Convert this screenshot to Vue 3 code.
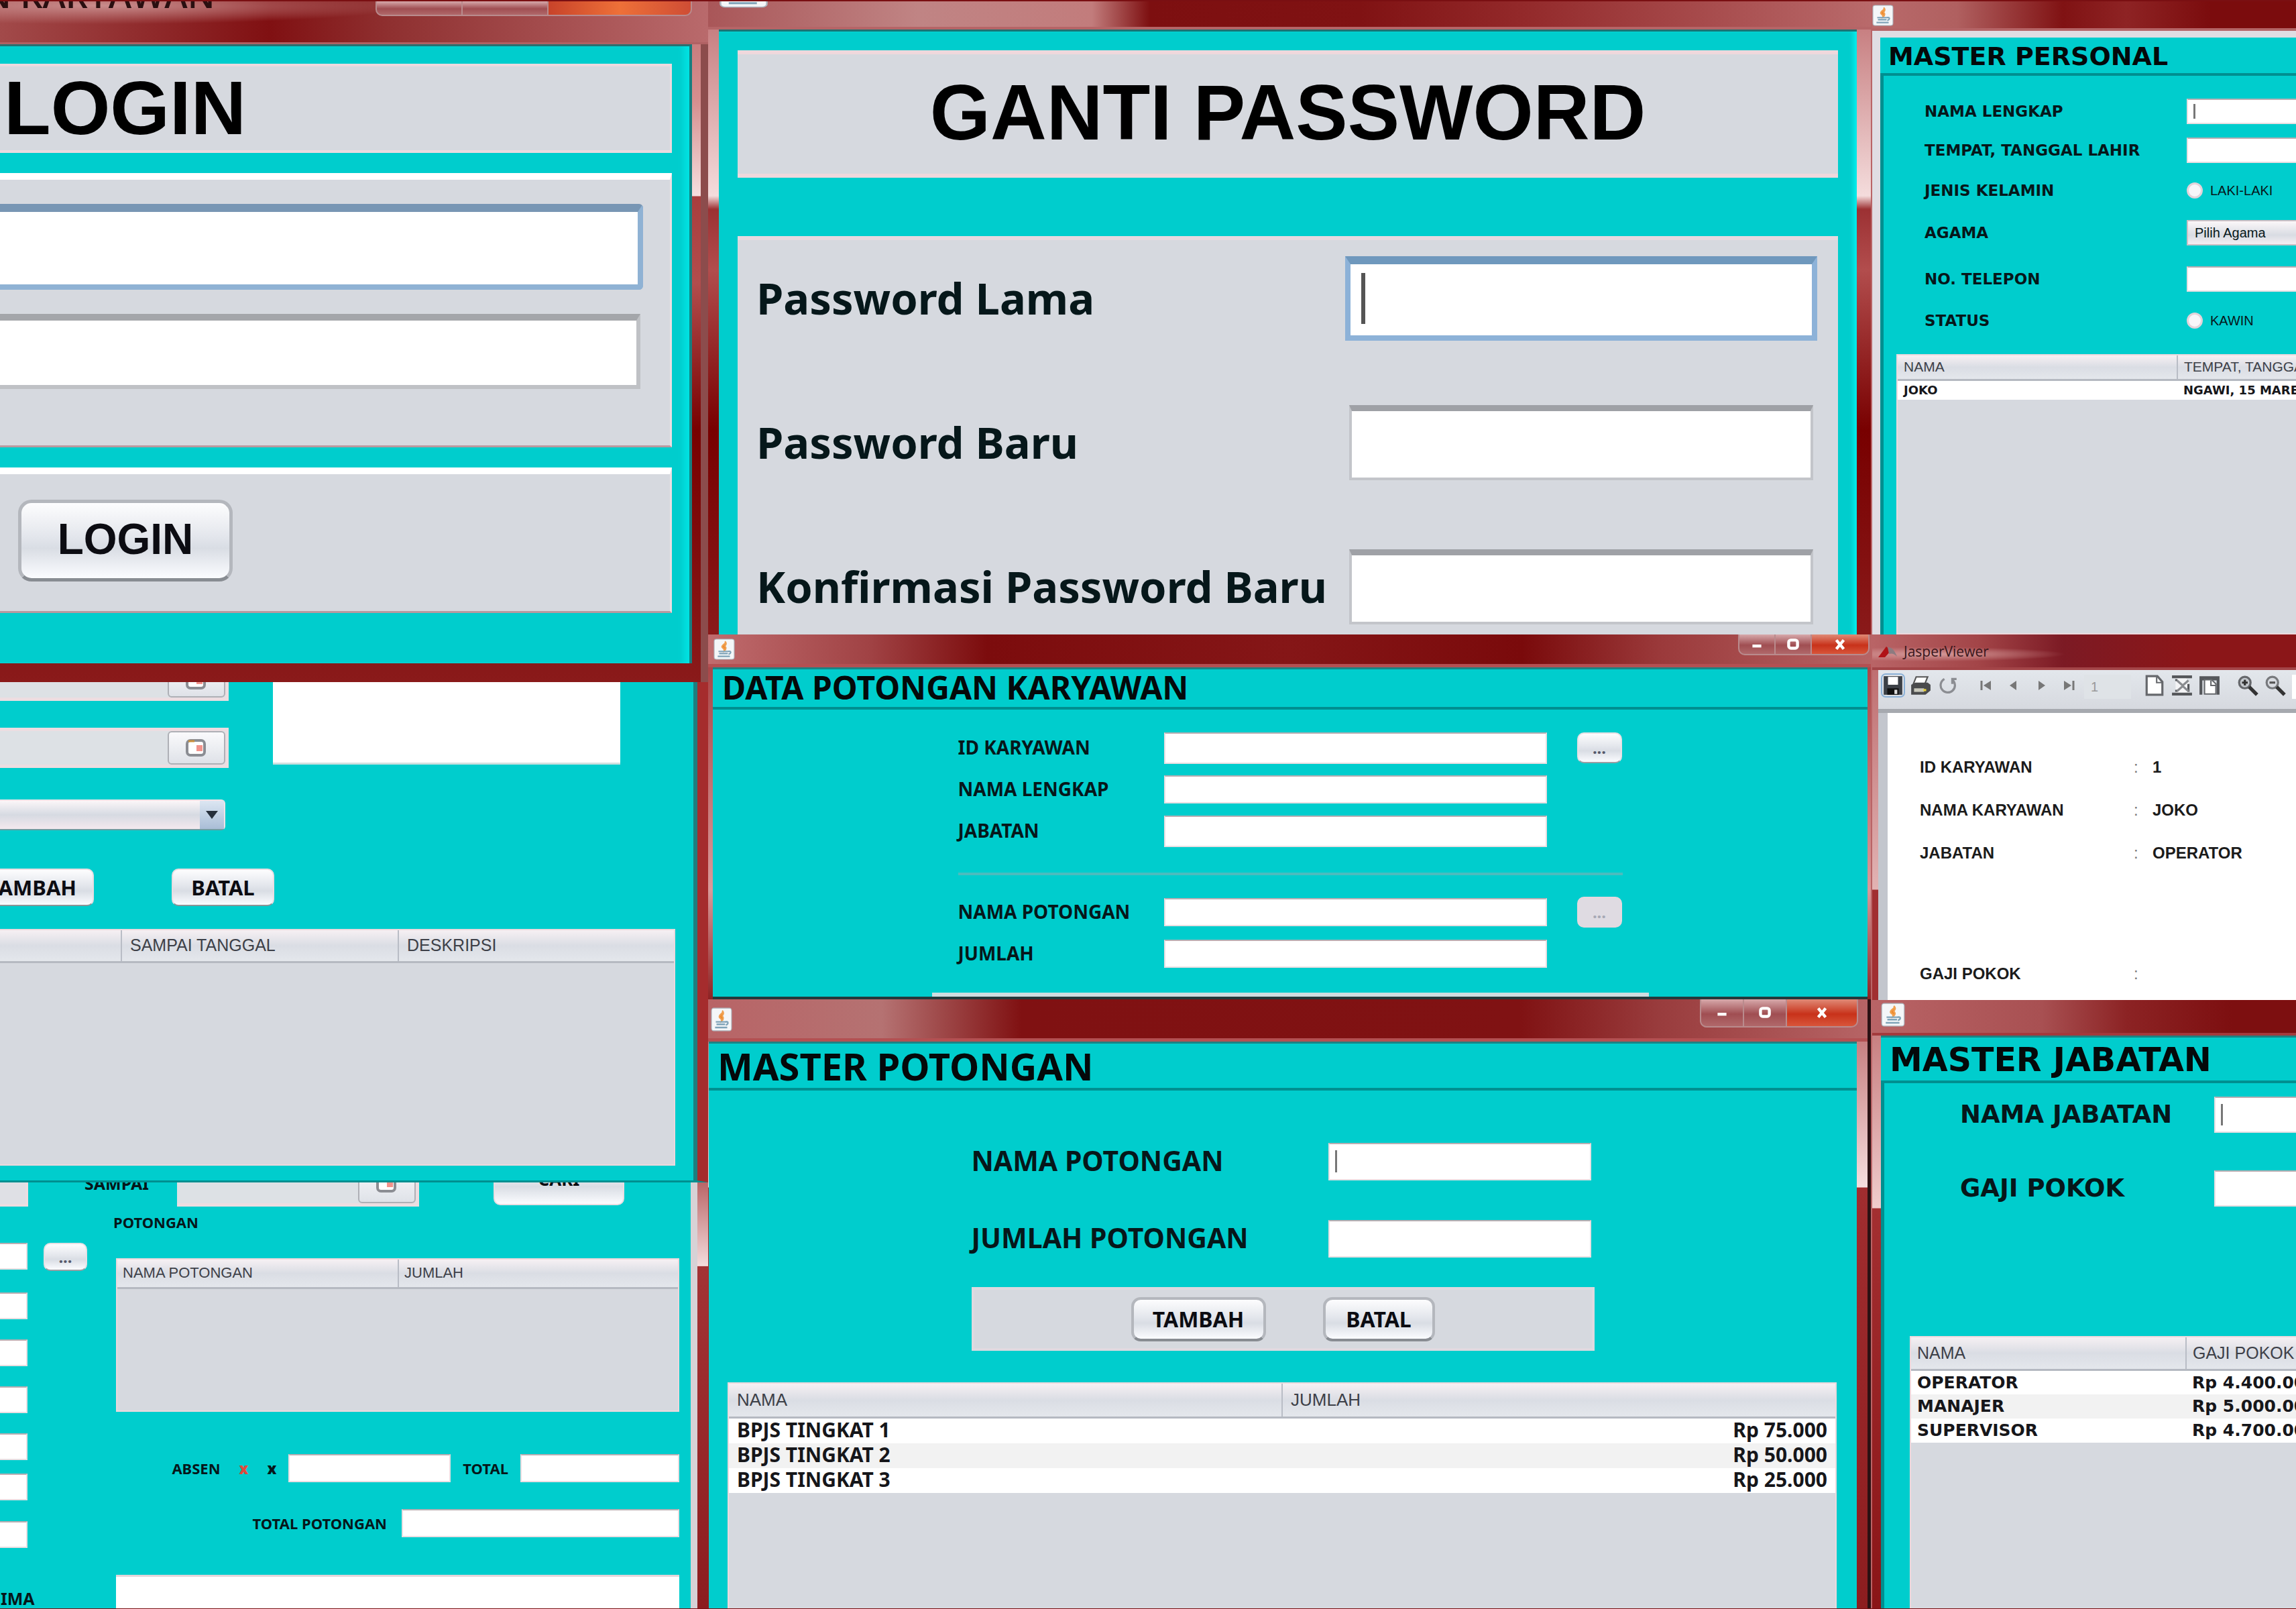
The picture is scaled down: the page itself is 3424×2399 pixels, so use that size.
<script setup>
const passwordFields = [
  { id: 'pw-lama', label: 'Password Lama', focus: true },
  { id: 'pw-baru', label: 'Password Baru' },
  { id: 'pw-konfirmasi', label: 'Konfirmasi Password Baru' }
]
const employeeFields = [
  { id: 'dp-id', label: 'ID KARYAWAN', pick: 'on', tall: true },
  { id: 'dp-nama', label: 'NAMA LENGKAP' },
  { id: 'dp-jabatan', label: 'JABATAN', tall: true }
]
const deductionFields = [
  { id: 'dp-potongan', label: 'NAMA POTONGAN', pick: 'off' },
  { id: 'dp-jumlah', label: 'JUMLAH' }
]
const deductions = [
  ['BPJS TINGKAT 1', 'Rp 75.000'],
  ['BPJS TINGKAT 2', 'Rp 50.000'],
  ['BPJS TINGKAT 3', 'Rp 25.000']
]
const positions = [
  ['OPERATOR', 'Rp 4.400.000'],
  ['MANAJER', 'Rp 5.000.000'],
  ['SUPERVISOR', 'Rp 4.700.000']
]
const slip = [
  ['ID KARYAWAN', '1'],
  ['NAMA KARYAWAN', 'JOKO'],
  ['JABATAN', 'OPERATOR'],
  ['GAJI POKOK', '']
]
</script>

<template>
  <svg class="defs" aria-hidden="true">
    <symbol id="java" viewBox="0 0 30 30" preserveAspectRatio="none">
      <rect x="1" y="1" width="28" height="28" rx="3" fill="#f4f6f8" stroke="#aeb9c2" />
      <path d="M16 4c3 3-5 5-4 8 1 2 4 2 3 5 4-3 2-5 1-6 0-2 4-3 0-7z" fill="#ee8a2c" stroke="#f0a050" stroke-width="2" />
      <path d="M7 18h15M8 21h12M6 25h17" stroke="#7fa3b8" stroke-width="2" fill="none" />
      <path d="M21 18c4-1 4 3 0 4" stroke="#7fa3b8" stroke-width="2" fill="none" />
    </symbol>
    <symbol id="calendar" viewBox="0 0 36 28">
      <rect x="4" y="3" width="26" height="22" rx="5" fill="#fff" stroke="#8b8d93" stroke-width="4" />
      <path d="M6 4h9" stroke="#c9903c" stroke-width="3" />
      <rect x="18" y="10" width="9" height="9" fill="#f2938c" />
    </symbol>
  </svg>

  <main class="board">
    <div class="column">
      <section class="win login">
        <header class="bar bar-login">
          <span class="bar-name">N KARYAWAN</span>
          <div class="controls controls-cut">
            <button aria-label="Minimize"></button><button aria-label="Maximize"></button><button class="close" aria-label="Close"></button>
          </div>
        </header>
        <form class="login-body" @submit.prevent>
          <h1 class="login-title">LOGIN</h1>
          <div class="raised login-fields">
            <input class="tf focus" aria-label="Username" />
            <input class="tf" type="password" aria-label="Password" />
          </div>
          <div class="raised login-actions"><button class="btn btn-login">LOGIN</button></div>
        </form>
      </section>

      <section class="win absence">
        <div class="absence-top">
          <div class="absence-left">
            <div class="date date-cut"><input aria-label="Dari tanggal" /><button aria-label="Pilih tanggal"><svg><use href="#calendar" /></svg></button></div>
            <div class="date"><input aria-label="Sampai tanggal" /><button aria-label="Pilih tanggal"><svg><use href="#calendar" /></svg></button></div>
            <div class="combo"><select aria-label="Keterangan"><option></option></select><span class="combo-arrow"></span></div>
          </div>
          <textarea class="note" aria-label="Deskripsi"></textarea>
        </div>
        <div class="absence-actions">
          <button class="btn btn-small btn-tambah">TAMBAH</button>
          <button class="btn btn-small">BATAL</button>
        </div>
        <div class="sheet absence-sheet">
          <table>
            <colgroup><col class="w181" /><col class="w413" /><col /></colgroup>
            <thead><tr><th></th><th>SAMPAI TANGGAL</th><th>DESKRIPSI</th></tr></thead>
          </table>
        </div>
      </section>

      <section class="win payroll">
        <div class="payroll-top">
          <div class="stub"></div>
          <label for="pr-sampai" class="lbl-s cut">SAMPAI</label>
          <div class="date date-cut"><input id="pr-sampai" /><button aria-label="Pilih tanggal"><svg><use href="#calendar" /></svg></button></div>
          <button class="btn btn-cari">CARI</button>
        </div>
        <div class="payroll-body">
          <div class="payroll-left">
            <div class="left-row"><input class="tf" aria-label="ID" /><button class="btn dots" aria-label="Pilih karyawan">...</button></div>
            <div v-for="n in 6" :key="n" class="left-row"><input class="tf" :aria-label="'Data ' + n" /></div>
            <span class="lbl-s ima">IMA</span>
          </div>
          <div class="payroll-right">
            <div class="lbl-s potongan">POTONGAN</div>
            <div class="sheet payroll-sheet">
              <table>
                <colgroup><col class="w419" /><col /></colgroup>
                <thead><tr><th>NAMA POTONGAN</th><th>JUMLAH</th></tr></thead>
              </table>
            </div>
            <div class="sum-row">
              <label class="lbl-s" for="pr-absen">ABSEN</label><b class="lbl-s red">x</b><b class="lbl-s">x</b>
              <input id="pr-absen" class="tf w242" />
              <label class="lbl-s" for="pr-total">TOTAL</label>
              <input id="pr-total" class="tf w237" />
            </div>
            <div class="sum-row sum-total">
              <label class="lbl-s" for="pr-potongan">TOTAL POTONGAN</label>
              <input id="pr-potongan" class="tf w414" />
            </div>
            <textarea class="net" aria-label="Gaji diterima"></textarea>
          </div>
        </div>
      </section>
    </div>

    <div class="column">
      <section class="win change">
        <header class="bar bar-change"><svg class="java java-cut"><use href="#java" /></svg></header>
        <form class="change-body" @submit.prevent>
          <h1 class="change-title">GANTI PASSWORD</h1>
          <div class="change-fields">
            <div v-for="f in passwordFields" :key="f.id" class="change-row">
              <label :for="f.id">{{ f.label }}</label>
              <div class="caret-box">
                <input :id="f.id" class="tf" :class="{ focus: f.focus }" type="password" />
                <i v-if="f.focus" class="caret"></i>
              </div>
            </div>
          </div>
        </form>
      </section>

      <section class="win data">
        <header class="bar bar-data">
          <svg class="java"><use href="#java" /></svg>
          <div class="controls">
            <button aria-label="Minimize"><svg viewBox="0 0 20 20"><path d="M4 12h12" /></svg></button>
            <button aria-label="Maximize"><svg viewBox="0 0 20 20"><rect x="4" y="4" width="12" height="11" rx="3" /></svg></button>
            <button class="close" aria-label="Close"><svg viewBox="0 0 20 20"><path d="M5 4l10 12M15 4L5 16" /></svg></button>
          </div>
        </header>
        <div class="pane">
          <h2>DATA POTONGAN KARYAWAN</h2>
          <form class="data-form" @submit.prevent>
            <div v-for="f in employeeFields" :key="f.id" class="data-row">
              <label :for="f.id">{{ f.label }}</label>
              <input :id="f.id" class="tf" :class="{ tall: f.tall }" />
              <button v-if="f.pick" class="btn dots" aria-label="Pilih">...</button>
            </div>
            <hr />
            <div v-for="f in deductionFields" :key="f.id" class="data-row">
              <label :for="f.id">{{ f.label }}</label>
              <input :id="f.id" class="tf" />
              <button v-if="f.pick" class="btn dots" disabled aria-label="Pilih">...</button>
            </div>
          </form>
          <div class="next-panel"></div>
        </div>
      </section>

      <section class="win master">
        <header class="bar bar-master">
          <svg class="java"><use href="#java" /></svg>
          <div class="controls">
            <button aria-label="Minimize"><svg viewBox="0 0 20 20"><path d="M4 12h12" /></svg></button>
            <button aria-label="Maximize"><svg viewBox="0 0 20 20"><rect x="4" y="4" width="12" height="11" rx="3" /></svg></button>
            <button class="close" aria-label="Close"><svg viewBox="0 0 20 20"><path d="M5 4l10 12M15 4L5 16" /></svg></button>
          </div>
        </header>
        <div class="pane">
          <h2>MASTER POTONGAN</h2>
          <form class="master-form" @submit.prevent>
            <div class="master-row">
              <label for="mp-nama">NAMA POTONGAN</label>
              <div class="caret-box"><input id="mp-nama" class="tf" /><i class="caret"></i></div>
            </div>
            <div class="master-row">
              <label for="mp-jumlah">JUMLAH POTONGAN</label>
              <div class="caret-box"><input id="mp-jumlah" class="tf" /></div>
            </div>
            <div class="master-actions">
              <button class="btn">TAMBAH</button>
              <button class="btn">BATAL</button>
            </div>
          </form>
          <div class="sheet master-sheet">
            <table>
              <colgroup><col class="half" /><col class="half" /></colgroup>
              <thead><tr><th>NAMA</th><th>JUMLAH</th></tr></thead>
              <tbody><tr v-for="r in deductions" :key="r[0]"><td>{{ r[0] }}</td><td class="num">{{ r[1] }}</td></tr></tbody>
            </table>
          </div>
        </div>
      </section>
    </div>

    <div class="column wide-type">
      <section class="win personal">
        <header class="bar bar-personal"><svg class="java"><use href="#java" /></svg></header>
        <div class="pane">
          <h2>MASTER PERSONAL</h2>
          <div class="inset">
            <form class="personal-form" @submit.prevent>
              <label for="ps-nama">NAMA LENGKAP</label>
              <div class="caret-box"><input id="ps-nama" class="tf" /><i class="caret"></i></div>
              <label for="ps-lahir">TEMPAT, TANGGAL LAHIR</label><input id="ps-lahir" class="tf" />
              <span>JENIS KELAMIN</span><label class="radio"><input type="radio" name="kelamin" />LAKI-LAKI</label>
              <label for="ps-agama">AGAMA</label><select id="ps-agama"><option>Pilih Agama</option></select>
              <label for="ps-telp">NO. TELEPON</label><input id="ps-telp" class="tf" />
              <span>STATUS</span><label class="radio"><input type="radio" name="status" />KAWIN</label>
            </form>
            <div class="sheet personal-sheet">
              <table>
                <colgroup><col class="w417" /><col /></colgroup>
                <thead><tr><th>NAMA</th><th>TEMPAT, TANGGAL LAHIR</th></tr></thead>
                <tbody><tr><td>JOKO</td><td>NGAWI, 15 MARET</td></tr></tbody>
              </table>
            </div>
          </div>
        </div>
      </section>

      <section class="win viewer">
        <header class="bar bar-viewer">
          <svg class="jasper" viewBox="0 0 30 20"><path d="M0 19L12 3l7 6-9 10z" fill="#b01217" /><path d="M14 4c7 0 11 6 14 14-5-5-8-5-12-4z" fill="#8d7b80" /></svg>
          <span>JasperViewer</span>
        </header>
        <div class="tools">
          <button class="save" aria-label="Save"><svg viewBox="0 0 30 30"><path d="M2 2h26v26H2z" fill="#3c4046" /><path d="M8 3h14v11H8z" fill="#fff" /><path d="M7 19h16v9H7z" fill="#111" /><path d="M17 21h4v6h-4z" fill="#ddd" /></svg></button>
          <button aria-label="Print"><svg viewBox="0 0 30 30"><path d="M9 3h16l-4 10H5z" fill="#fff" stroke="#555" stroke-width="2" /><path d="M2 14l6-3h17l4 3v8l-7 6H2z" fill="#4a4b4d" /><path d="M6 19h14v5H6z" fill="#c9c9bd" /><path d="M19 20h4v3h-4z" fill="#e8d23a" /></svg></button>
          <button aria-label="Reload"><svg viewBox="0 0 30 30"><path d="M10 6a10 10 0 1 0 11 1M21 13V6h6" fill="none" stroke="#8b8d92" stroke-width="3" /></svg></button>
          <button class="nav first" aria-label="First page"><svg viewBox="0 0 20 30"><path d="M3 8v14" stroke="#777" stroke-width="3" /><path d="M17 8v14L6 15z" fill="#777" /></svg></button>
          <button class="nav" aria-label="Previous page"><svg viewBox="0 0 20 30"><path d="M14 8v14L4 15z" fill="#777" /></svg></button>
          <button class="nav" aria-label="Next page"><svg viewBox="0 0 20 30"><path d="M6 8v14l10-7z" fill="#777" /></svg></button>
          <button class="nav" aria-label="Last page"><svg viewBox="0 0 20 30"><path d="M17 8v14" stroke="#777" stroke-width="3" /><path d="M3 8v14l11-7z" fill="#777" /></svg></button>
          <input class="page-no" value="1" aria-label="Page" />
          <button aria-label="Actual size"><svg viewBox="0 0 30 30"><path d="M4 2h15l7 8v18H4z" fill="#fff" stroke="#66686c" stroke-width="3" /><path d="M18 3v8h8" fill="none" stroke="#66686c" stroke-width="2" /></svg></button>
          <button aria-label="Fit page"><svg viewBox="0 0 30 30"><path d="M6 4h14l5 6v17H6z" fill="#f4f4f6" /><path d="M1 3h28M1 27h28" stroke="#55575b" stroke-width="4" /><path d="M7 6v3M7 21v3M24 13v11" stroke="#55575b" stroke-width="3" /><path d="M8 8l8 7 8-7M8 23l8-7 8 7" fill="none" stroke="#8a8c90" stroke-width="3" /></svg></button>
          <button aria-label="Fit width"><svg viewBox="0 0 30 30"><path d="M1 2h28v6H1zM1 2h4v26H1zM25 2h4v26h-4z" fill="#55575b" /><path d="M8 7h10l6 6v14H8z" fill="#fff" stroke="#66686c" stroke-width="2" /><path d="M17 8v7h7" fill="none" stroke="#66686c" stroke-width="2" /></svg></button>
          <button class="zoom-in" aria-label="Zoom in"><svg viewBox="0 0 30 30"><circle cx="11" cy="11" r="8" fill="#c4c8cd" stroke="#66686c" stroke-width="3" /><path d="M7 11h8M11 7v8" stroke="#333" stroke-width="3" /><path d="M17 17l11 11" stroke="#333" stroke-width="5" /></svg></button>
          <button aria-label="Zoom out"><svg viewBox="0 0 30 30"><circle cx="11" cy="11" r="8" fill="#d8dbe0" stroke="#77797d" stroke-width="3" /><path d="M7 11h8" stroke="#555" stroke-width="3" /><path d="M17 17l11 11" stroke="#333" stroke-width="5" /></svg></button>
          <input class="zoom-box" aria-label="Zoom" />
        </div>
        <dl class="paper">
          <div v-for="r in slip" :key="r[0]" class="slip-row"><dt>{{ r[0] }}</dt><dd class="colon">:</dd><dd>{{ r[1] }}</dd></div>
        </dl>
      </section>

      <section class="win position">
        <header class="bar bar-position"><svg class="java"><use href="#java" /></svg></header>
        <div class="pane">
          <h2>MASTER JABATAN</h2>
          <div class="inset">
            <form class="position-form" @submit.prevent>
              <label for="mj-nama">NAMA JABATAN</label>
              <div class="caret-box"><input id="mj-nama" class="tf" /><i class="caret"></i></div>
              <label for="mj-gaji">GAJI POKOK</label><input id="mj-gaji" class="tf" />
            </form>
            <div class="sheet position-sheet">
              <table>
                <colgroup><col class="w410" /><col /></colgroup>
                <thead><tr><th>NAMA</th><th>GAJI POKOK</th></tr></thead>
                <tbody><tr v-for="r in positions" :key="r[0]"><td>{{ r[0] }}</td><td>{{ r[1] }}</td></tr></tbody>
              </table>
            </div>
          </div>
        </div>
      </section>
    </div>
  </main>
</template>

<style>
body { margin: 0; }
</style>

<style scoped>
* { box-sizing: border-box; }
.defs { position: absolute; width: 0; height: 0; }
.board {
  display: grid;
  grid-template-columns: 1056fr 1734fr 634fr;
  min-height: 100vh;
  overflow: hidden;
  background: #851616;
  border-top: 2px solid #7a0f12;
  border-bottom: 2px solid #7a0f12;
  font-family: "Noto Sans", "Open Sans", sans-serif;
  font-weight: 700;
  color: #06171a;
}
.column { display: flex; flex-direction: column; min-width: 0; overflow: hidden; }
.win { display: flex; flex-direction: column; overflow: hidden; }
.column > .win:last-child { flex: 1; }
h1, h2 { margin: 0; font-weight: 700; color: #04090a; }
button, input, select, textarea { font: inherit; color: inherit; margin: 0; padding: 0; border-radius: 0; outline: 0; }
input { min-width: 0; }

/* title bars */
.bar { display: flex; align-items: flex-start; justify-content: space-between; flex: none; }
.java { width: 32px; height: 32px; flex: none; }
.controls { display: flex; }
.controls button {
  display: flex; align-items: center; justify-content: center;
  border: 2px solid #b98b8d; border-top: 0; border-right-width: 0;
  background: linear-gradient(#d7a9ab, #a04e52 55%, #b0686a);
}
.controls button:first-child { border-bottom-left-radius: 10px; }
.controls .close { background: linear-gradient(#e08a76, #c8321a 55%, #d8553a); border-right-width: 2px; border-bottom-right-radius: 10px; }
.controls svg { width: 22px; height: 22px; fill: none; stroke: #fff; stroke-width: 4; }

/* shared controls */
.tf { display: block; width: 100%; height: 42px; background: #fff; border: 2px solid #e9dfe2; border-top-color: #b9aeb2; }
.caret-box { position: relative; }
.caret { position: absolute; left: 10px; top: 20%; bottom: 20%; width: 3px; background: #777; }
.btn {
  background: linear-gradient(#fdfdfe, #e3e6ec 45%, #d9dde4 60%, #fbfcff);
  border: 2px solid #b4b7bd; border-bottom-color: #888c92; border-radius: 10px;
  color: #0c0c12;
}
.dots { display: flex; align-items: center; justify-content: center; font-size: 24px; line-height: 24px; color: #55586a; border-color: #e6e0e4; border-bottom-color: #9b9ea3; }
.dots:disabled { background: #dfdbe2; color: #a6a8b4; border-color: #e6d8de; }
.raised { background: #d6d9df; border: 3px solid #ecdfe3; border-top: 10px solid #fff; border-bottom-color: #b9999f; border-left: 0; }
.sheet { background: #d6d9df; border: 2px solid #ecd9dd; overflow: hidden; }
table { width: 100%; border-collapse: collapse; table-layout: fixed; }
th, td { padding: 0 12px; text-align: left; white-space: nowrap; overflow: hidden; }
th {
  font-family: "Liberation Sans", Arial, sans-serif; font-weight: 400; color: #3d4048;
  background: linear-gradient(#f6f0f3, #dadde4 50%, #e4e7ec);
  border-right: 2px solid #b9bdc6; border-bottom: 3px solid #b5b9c1;
}
th:last-child { border-right: 0; }
td { background: #fff; color: #16161a; }
tbody tr:nth-child(even) td { background: #f2f2f2; }
.num { text-align: right; }
.half { width: 50%; }
.w181 { width: 181px; } .w413 { width: 413px; } .w419 { width: 419px; }
.w417 { width: 417px; } .w410 { width: 410px; }
.pane { display: flex; flex-direction: column; flex: 1; background: #00cdcd; }
.pane h2 { border-bottom: 4px solid #008f90; white-space: nowrap; }
.inset { display: flex; flex-direction: column; flex: 1; border-left: 5px solid #008f90; }

/* login */
.bar-login {
  height: 64px; margin-right: -24px; padding-right: 24px; overflow: hidden;
  background: radial-gradient(ellipse at 14% 10%, #c98c8c, transparent 36%), linear-gradient(90deg, #a24a4a, #801012 38%, #8f3030 55%, #b96a6c);
  border-bottom: 3px solid #b06163;
}
.bar-name { margin: -46px 0 0 -24px; font: 600 52px/72px "Open Sans", sans-serif; color: #2a0f10; white-space: nowrap; }
.bar-login .controls { height: 22px; }
.bar-login .controls button { width: 128px; }
.bar-login .controls .close { width: 216px; background: linear-gradient(90deg, #c8432a, #ee7038 50%, #cf4d35); }
.login {
  padding-right: 24px; padding-bottom: 28px;
  background: linear-gradient(90deg, transparent 0 99%, #8c4c4c 99%), linear-gradient(#c07072 0, #d68f8f 150px, #f6dede 290px, #a93d3d 291px, #b24d4d 420px, #780000 640px, #8a1a1a 100%);
}
.login-body { background: #00cdcd; border-right: 4px solid #157f80; border-top: 3px solid #2b6f70; padding: 26px 26px 75px 0; box-shadow: inset -12px 0 10px -4px #00e2e2; }
.login-title {
  font: 700 114px/124px "Liberation Sans", Arial, sans-serif; height: 133px; padding-left: 6px;
  background: #d6d9df; border: solid #ecdadf; border-width: 4px 3px 4px 0; color: #000;
}
.login-fields { margin-top: 30px; height: 409px; padding: 36px 40px 0 0; }
.login-fields .tf { height: 112px; border: 6px solid #bfc1c5; border-top: 10px solid #a4a6aa; border-left: 0; margin-top: 36px; width: calc(100% - 4px); }
.login-fields .tf.focus { height: 128px; border: 8px solid #8fb2d4; border-top: 12px solid #7896b4; border-left: 0; margin-top: 0; border-radius: 0 6px 6px 0; width: 100%; }
.login-actions { margin-top: 30px; height: 217px; padding: 38px 0 0 27px; }
.btn-login { display: block; width: 320px; height: 122px; border-width: 5px; border-radius: 20px; font: 700 64px/64px "Liberation Sans", Arial, sans-serif; padding-bottom: 4px; }

/* absence */
.absence { flex: none; background: #00cdcd; border-right: 16px solid #a52c2d; border-bottom: 3px solid #008f90; padding-right: 33px; box-shadow: inset -6px 0 0 #1d7e7f; }
.absence-top { display: flex; align-items: flex-start; gap: 66px; height: 222px; }
.absence-left { width: 341px; }
.date { display: flex; height: 60px; background: #dde1e5; border: 5px solid #ecdde1; border-left: 0; }
.date input { flex: 1; border: 0; background: transparent; }
.date button { width: 86px; display: flex; align-items: center; justify-content: center; border: 2px solid #aeb0b6; border-radius: 6px; background: linear-gradient(#fafafc, #dfe2e8); }
.date svg { width: 36px; height: 28px; }
.date-cut { margin-top: -32px; }
.absence-left .date + .date { margin-top: 40px; }
.combo { display: flex; width: 336px; height: 46px; margin-top: 47px; background: linear-gradient(#fbf6f8, #d6dae2 50%, #f4e9ee); border: 2px solid #f0e4e8; border-left: 0; border-bottom-color: #6f9ca0; border-radius: 0 6px 6px 0; }
.combo select { flex: 1; appearance: none; border: 0; background: transparent; }
.combo-arrow { width: 36px; display: flex; align-items: center; justify-content: center; background: linear-gradient(#dce6f2, #a9bdd6); }
.combo-arrow::after { content: ""; border: 9px solid transparent; border-top: 12px solid #26303c; border-bottom: 0; }
.note { width: 518px; height: 123px; border: 0; border-bottom: 3px solid #cfe0e0; background: #fff; resize: none; display: block; }
.absence-actions { display: flex; gap: 116px; margin-top: 56px; }
.btn-small { width: 153px; height: 56px; font-size: 31px; line-height: 40px; border-color: #eadde2; border-bottom-color: #8b9496; }
.btn-tambah { width: 184px; margin-left: -44px; }
.absence-sheet { height: 353px; margin: 34px 0 22px; border-left: 0; }
.absence-sheet th { height: 47px; font-size: 25px; }

/* payroll */
.payroll { background: #00cdcd; border-style: solid; border-width: 0 16px 0 0; border-image: linear-gradient(#b96466, #f3dcdc 125px, #a33335 126px, #8c1d1f) 1; box-shadow: inset -10px 0 0 #d7d2d6; }
.payroll-top { display: flex; align-items: flex-start; height: 36px; overflow: hidden; }
.stub { width: 42px; height: 36px; background: #dfe0e5; border: 4px solid #ecdde1; border-width: 0 4px 4px 0; }
.lbl-s { font-size: 22px; line-height: 30px; white-space: nowrap; }
.cut { margin: -14px 0 0 84px; width: 138px; font-size: 25px; }
.payroll-top .date { width: 361px; height: 68px; }
.btn-cari { width: 195px; height: 68px; margin: -34px 0 0 111px; padding-bottom: 10px; font-size: 26px; line-height: 34px; border-color: #eadde2; }
.payroll-body { display: grid; grid-template-columns: 130px 840px; column-gap: 43px; flex: 1; }
.payroll-left { display: grid; grid-template-rows: 74px 70px 70px 70px 60px 71px 80px 1fr; padding-top: 54px; }
.left-row { display: flex; gap: 24px; align-items: flex-start; }
.left-row .tf { width: 41px; height: 40px; border-left: 0; }
.left-row .dots { width: 65px; height: 42px; }
.ima { margin-top: 20px; font-size: 25px; padding-left: 1px; }
.payroll-right { display: flex; flex-direction: column; }
.potongan { margin-top: 8px; margin-left: -4px; }
.payroll-sheet { height: 229px; margin-top: 39px; }
.payroll-sheet th { height: 42px; font-size: 22px; padding-left: 8px; }
.sum-row { display: flex; align-items: center; justify-content: flex-end; gap: 18px; margin-top: 63px; }
.sum-row .red { color: #e04a3c; margin-left: 10px; margin-right: 10px; }
.sum-total { margin-top: 40px; gap: 22px; }
.sum-row .w242 { width: 242px; } .sum-row .w237 { width: 237px; } .sum-row .w414 { width: 414px; }
.net { flex: 1; min-height: 44px; margin-top: 56px; border: 0; border-top: 3px solid #e3d6da; background: #fff; resize: none; }

/* change password */
.change {
  padding: 0 21px 0 16px; height: 944px; flex: none;
  background: linear-gradient(#c07072 0, #f4dcdc 290px, #9c3133 310px, #b24d4d 400px, #780000 640px, #8a1a1a 100%);
}
.bar-change { height: 42px; margin: 0 -21px 0 -16px; padding-left: 16px; background: linear-gradient(90deg, #a95658, #c08484 18%, #c27c7c 33%, #7d0f10 38%, #801213 56%, #93292a 70%, #b96a6b); border-bottom: 4px solid #b56567; }
.java-cut { width: 74px; height: 44px; margin-top: -34px; }
.change-body { flex: 1; display: flex; flex-direction: column; background: #00cdcd; border-top: 3px solid #1b7374; padding: 28px 28px 0; box-shadow: inset -8px 0 6px -3px #00eded; }
.change-title { height: 190px; font: 700 116px/174px "Liberation Sans", Arial, sans-serif; text-align: center; background: #d6d9df; border: solid #efd8dc; border-width: 6px 0; white-space: nowrap; color: #000; }
.change-fields { flex: 1; margin-top: 87px; padding: 0 31px 0 28px; background: #d6d9df; border-top: 6px solid #e6dae0; }
.change-row { display: flex; align-items: center; justify-content: space-between; height: 215px; }
.change-row:first-child { height: 194px; padding-bottom: 20px; }
.change-row label { font-size: 65px; line-height: 80px; padding-bottom: 2px; white-space: nowrap; }
.change-row .caret-box { width: 704px; padding: 0 6px; }
.change-row .tf { height: 112px; border: 4px solid #c3c5ca; border-top: 9px solid #9fa1a6; }
.change-row .caret-box:has(.focus) { padding: 0; }
.change-row .tf.focus { height: 126px; border: 8px solid #8db2d8; border-top: 12px solid #6f98bd; }
.change-row .caret { left: 24px; width: 6px; background: #555; }

/* employee deductions */
.data { flex: none; padding: 0 5px 0 7px; background: linear-gradient(#a33a3c, #d99a9a 70%, #8c2223); }
.bar-data { height: 49px; margin: 0 -5px 0 -7px; padding: 0 2px 0 8px; background: linear-gradient(90deg, #c06c6e, #a04244 14%, #7c0c0d 24%, #851617 50%, #7a0a0b 70%, #9b3a3b 82%, #b66465); border-bottom: 5px solid #b35052; }
.bar-data .java { margin-top: 6px; }
.bar-data .controls { height: 31px; }
.bar-data .controls button { width: 54px; }
.bar-data .controls .close { width: 88px; }
.data .pane { border-top: 3px solid #1b8384; border-bottom: 4px solid #24393b; }
.data h2 { height: 60px; padding-left: 14px; font-size: 48px; line-height: 54px; }
.data-form { width: 991px; margin: 0 auto; padding-top: 26px; }
.data-row { display: grid; grid-template-columns: 307px 571px 67px; align-items: center; height: 62px; }
.data-row label { font-size: 28px; line-height: 36px; padding-bottom: 2px; }
.data-row .tall { height: 47px; }
.data-row .dots { width: 67px; height: 46px; margin-left: 45px; }
hr { border: 0; height: 4px; margin: 31px 0 24px; background: #4cbcbe; }
.next-panel { width: 1069px; height: 6px; margin: 27px auto 0; background: #cfdde0; }

/* deduction master */
.master { padding: 0 21px 0 1px; background: linear-gradient(90deg, transparent calc(100% - 5px), #2b1113 calc(100% - 5px)), linear-gradient(#b96466, #f6dede 280px, #a02d2f 281px, #8c1d1f); }
.bar-master { height: 63px; margin: 0 -16px 0 -1px; padding: 0 14px 0 4px; background: linear-gradient(90deg, #b86466, #b57272 15%, #801112 27%, #801213 70%, #993c3d 82%, #b66465); border-bottom: 5px solid #b35052; }
.bar-master .java { margin-top: 12px; height: 36px; }
.bar-master .controls { height: 42px; }
.bar-master .controls button { width: 64px; }
.bar-master .controls .close { width: 108px; }
.master .pane { border-top: 3px solid #1b8384; }
.master h2 { height: 70px; padding-left: 13px; font-size: 56px; line-height: 66px; }
.master-form { width: 929px; margin: 0 auto; padding-top: 48px; }
.master-row { display: flex; justify-content: space-between; align-items: center; height: 115px; padding-right: 5px; }
.master-row label { font-size: 41px; line-height: 50px; padding-bottom: 4px; }
.master-row .caret-box { width: 392px; }
.master-row .tf { height: 56px; }
.master-actions { display: flex; justify-content: center; gap: 85px; align-items: center; height: 95px; margin-top: 15px; background: #d6d9df; border: 4px solid #dfdae0; }
.master-actions .btn { width: 167px; height: 66px; font-size: 32px; line-height: 40px; border-width: 4px; border-radius: 14px; }
.master-actions .btn:first-child { width: 201px; }
.master-sheet { flex: 1; margin: 47px 30px 0 28px; border-bottom: 0; }
.master-sheet th { height: 50px; font-size: 26px; }
.master-sheet td { height: 37px; font-size: 30px; line-height: 34px; padding-bottom: 3px; }

/* right column uses a wider face */
.wide-type { font-family: "DejaVu Sans", Verdana, sans-serif; border-left: 2px solid #b96466; }
.personal { height: 944px; flex: none; background: #e0dde3; }
.bar-personal { height: 44px; padding-top: 5px; background: linear-gradient(90deg, #b96a6b, #b06060 20%, #801213 45%, #8e2324 60%, #7b0c0d 80%); border-bottom: 4px solid #b56567; }
.personal .pane { margin: 10px 0 0 12px; }
.personal h2 { height: 57px; font-size: 38px; line-height: 56px; padding-left: 12px; }
.personal-form { display: grid; grid-template-columns: 391px 1fr; grid-template-rows: 58px 58px 61px 65px 73px 51px; align-items: center; padding: 24px 0 0 61px; font-size: 23px; line-height: 30px; white-space: nowrap; }
.personal-form .tf { height: 38px; border-right: 0; }
.personal-form select { height: 38px; appearance: none; padding-left: 10px; border: 2px solid #cdbfc5; background: linear-gradient(#fbf7f9, #d9dce3 60%, #f3eef2); font: 400 20px/30px "Liberation Sans", Arial, sans-serif; border-right: 0; }
.radio { display: flex; align-items: center; gap: 11px; font: 400 20px/28px "Liberation Sans", Arial, sans-serif; }
.radio input { appearance: none; width: 24px; height: 24px; border: 3px solid #e4d3da; border-radius: 50%; background: #f8f6f9; }
.personal-sheet { flex: 1; margin: 25px 0 0 19px; border-right: 0; }
.personal-sheet th { height: 36px; font-size: 21px; padding-left: 9px; }
.personal-sheet td { height: 29px; font-size: 18px; line-height: 28px; padding-left: 9px; }

/* report viewer */
.viewer { height: 545px; flex: none; padding-left: 9px; background: linear-gradient(#b96466, #e2b3b3 380px, #a12f31 381px); }
.bar-viewer { height: 53px; margin-left: -9px; padding-left: 9px; justify-content: flex-start; align-items: center; gap: 8px; background: radial-gradient(ellipse at 14% 60%, #d59a9a, transparent 26%), linear-gradient(90deg, #b96466, #a34548 25%, #7c1a24 45%, #8b1618 75%); border-bottom: 4px solid #a34548; font: 400 21px/30px "Open Sans", sans-serif; color: #38151a; }
.jasper { width: 30px; height: 20px; }
.tools { display: flex; align-items: flex-start; gap: 9px; height: 64px; padding: 7px 0 0 6px; background: linear-gradient(#e3e7ec, #d6d9df); border-bottom: 6px solid #a6a9af; overflow: hidden; }
.tools button { flex: none; width: 32px; height: 32px; border: 0; background: transparent; }
.tools svg { display: block; width: 100%; height: 100%; }
.tools .save { box-shadow: 0 0 0 2px #8bb0d6; border-radius: 5px; }
.tools .nav { width: 20px; margin-right: 12px; }
.tools .first { margin-left: 22px; }
.page-no { width: 70px; height: 36px; flex: none; padding-left: 10px; border: 0; background: #dfe3e7; font: 400 20px/30px "Liberation Sans", Arial, sans-serif; color: #999; margin-left: -8px; margin-right: 10px; }
.tools .zoom-in { margin-left: 16px; }
.zoom-box { width: 60px; height: 36px; border: 0; background: #fff; }
.paper { flex: 1; margin: 0; padding: 49px 0 0 48px; background: #fff; border-left: 14px solid #c3c6cd; font: 700 24px/64px "Liberation Sans", Arial, sans-serif; color: #1b1b1b; }
.slip-row { display: grid; grid-template-columns: 319px 28px 1fr; height: 64px; white-space: nowrap; }
.slip-row:last-child { margin-top: 116px; }
.slip-row dd { margin: 0; }
.slip-row .colon { font-weight: 400; color: #777; }

/* position master */
.position { padding-left: 13px; background: linear-gradient(#c07072, #f0cccc 310px, #a32f31 311px, #8a1517); }
.bar-position { height: 53px; margin-left: -13px; padding: 4px 0 0 13px; background: linear-gradient(90deg, #b96466, #a85052 40%, #8c2324 60%, #7d0f10 85%); border-bottom: 4px solid #a33a3c; }
.bar-position .java { width: 36px; height: 36px; }
.position .pane { border-top: 3px solid #1b8384; }
.position h2 { height: 68px; padding-left: 13px; font-size: 49px; line-height: 68px; }
.position-form { display: grid; grid-template-columns: 379px 1fr; grid-template-rows: 94px 126px; align-items: center; padding-left: 113px; height: 377px; align-content: start; font-size: 37px; line-height: 44px; white-space: nowrap; }
.position-form .tf { height: 54px; border-right: 0; }
.position-sheet { flex: 1; margin-left: 38px; border-right: 0; border-bottom: 0; }
.position-sheet th { height: 48px; font-size: 25px; padding-left: 9px; }
.position-sheet td { height: 36px; font-size: 25px; line-height: 35px; padding-left: 9px; }
</style>
